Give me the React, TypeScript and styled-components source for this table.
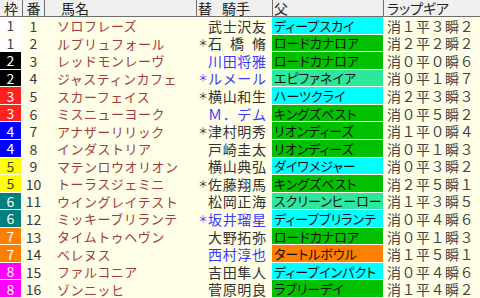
import React from "react";
import styled, { createGlobalStyle } from "styled-components";

const Global = createGlobalStyle`
  html, body { margin: 0; padding: 0; background: #ffffe8; }
  body { font-family: "Noto Sans CJK JP", "Noto Sans", sans-serif; }
`;

const COLS = "22px 22px 152px 76px 111px 97px";

const Table = styled.div`
  width: 480px;
  height: 298px;
  display: flex;
  flex-direction: column;
  background: #ffffe8;
  overflow: hidden;
`;

const HeaderRow = styled.div`
  display: grid;
  grid-template-columns: ${COLS};
  height: 17px;
  flex: none;
  background: #f0f0f0;
  border-bottom: 1px solid #6e6e6e;
  box-sizing: border-box;
`;

const HeadCell = styled.div<{ $pl?: number; $center?: boolean; $first?: boolean }>`
  display: flex;
  align-items: center;
  gap: 10px;
  justify-content: ${(p) => (p.$center ? "center" : "flex-start")};
  padding-left: ${(p) => p.$pl ?? 0}px;
  border-left: ${(p) => (p.$first ? "none" : "1px solid #6e6e6e")};
  font-size: 14px;
  line-height: 1;
  color: #222;
  white-space: nowrap;
  font-feature-settings: "palt";
`;

const Row = styled.div`
  display: grid;
  grid-template-columns: ${COLS};
  flex: 1;
  min-height: 0;
`;

const Waku = styled.div<{ $bg: string; $fg: string }>`
  background: ${(p) => p.$bg};
  color: ${(p) => p.$fg};
  border-bottom: 1px solid #ffffe8;
  border-right: 1px solid #ffffe8;
  display: flex;
  align-items: center;
  justify-content: center;
  font-size: 14px;
  line-height: 1;
`;

const Num = styled.div`
  display: flex;
  align-items: center;
  justify-content: center;
  padding-left: 1px;
  font-size: 14px;
  line-height: 1;
  color: #3a3a3a;
`;

const Name = styled.div`
  display: flex;
  align-items: center;
  padding-left: 13px;
  font-size: 13px;
  letter-spacing: 0.5px;
  line-height: 1;
  color: #a23a3a;
  white-space: nowrap;
  overflow: visible;
`;

const Jockey = styled.div<{ $blue: boolean }>`
  display: flex;
  align-items: center;
  justify-content: flex-end;
  padding-right: 6px;
  font-size: 14px;
  line-height: 1;
  color: ${(p) => (p.$blue ? "#3a3aff" : "#333")};
  white-space: nowrap;
`;

const Star = styled.span`
  width: 9px;
  font-size: 10px;
  text-align: left;
  margin-right: 1px;
  overflow: visible;
`;

const JName = styled.span`
  width: 58px;
  display: flex;
  justify-content: space-between;
`;

const Sire = styled.div<{ $bg: string }>`
  background: ${(p) => p.$bg};
  border-bottom: 1px solid #ffffe8;
  display: flex;
  align-items: center;
  padding-left: 2px;
  font-size: 13px;
  line-height: 1;
  color: #111;
  white-space: nowrap;
  overflow: hidden;
  font-feature-settings: "palt";
`;

const Gear = styled.div`
  display: flex;
  align-items: center;
  padding-left: 4px;
  font-size: 14px;
  letter-spacing: 0.5px;
  line-height: 1;
  color: #444;
  white-space: nowrap;
`;

const WAKU: Record<number, [string, string]> = {
  1: ["#ffffff", "#444"],
  2: ["#000000", "#fff"],
  3: ["#ff2020", "#fff"],
  4: ["#0000ff", "#fff"],
  5: ["#ffff00", "#444"],
  6: ["#008080", "#fff"],
  7: ["#ff8000", "#fff"],
  8: ["#ff00ff", "#fff"],
};

const SIRE_BG: Record<string, string> = {
  c: "#00ffff",
  g: "#00c000",
  s: "#2de89c",
  o: "#ff8000",
};

type Horse = {
  w: number;
  n: number;
  name: string;
  star: boolean;
  jockey: string[];
  blue: boolean;
  sire: string;
  sc: string;
  gear: string;
};

const j = (s: string) => Array.from(s);

const horses: Horse[] = [
  { w: 1, n: 1, name: "ソロフレーズ", star: false, jockey: j("武士沢友"), blue: false, sire: "ディープスカイ", sc: "c", gear: "消１平３瞬２" },
  { w: 1, n: 2, name: "ルプリュフォール", star: true, jockey: j("石橋脩"), blue: false, sire: "ロードカナロア", sc: "g", gear: "消２平２瞬２" },
  { w: 2, n: 3, name: "レッドモンレーヴ", star: false, jockey: j("川田将雅"), blue: true, sire: "ロードカナロア", sc: "g", gear: "消０平０瞬６" },
  { w: 2, n: 4, name: "ジャスティンカフェ", star: true, jockey: j("ルメール"), blue: true, sire: "エピファネイア", sc: "s", gear: "消０平１瞬７" },
  { w: 3, n: 5, name: "スカーフェイス", star: true, jockey: j("横山和生"), blue: false, sire: "ハーツクライ", sc: "c", gear: "消２平３瞬３" },
  { w: 3, n: 6, name: "ミスニューヨーク", star: false, jockey: ["Ｍ", "．", "デ", "ム"], blue: true, sire: "キングズベスト", sc: "g", gear: "消０平５瞬２" },
  { w: 4, n: 7, name: "アナザーリリック", star: true, jockey: j("津村明秀"), blue: false, sire: "リオンディーズ", sc: "g", gear: "消１平０瞬４" },
  { w: 4, n: 8, name: "インダストリア", star: false, jockey: j("戸崎圭太"), blue: false, sire: "リオンディーズ", sc: "g", gear: "消０平１瞬３" },
  { w: 5, n: 9, name: "マテンロウオリオン", star: false, jockey: j("横山典弘"), blue: false, sire: "ダイワメジャー", sc: "c", gear: "消０平３瞬２" },
  { w: 5, n: 10, name: "トーラスジェミニ", star: true, jockey: j("佐藤翔馬"), blue: false, sire: "キングズベスト", sc: "g", gear: "消２平５瞬１" },
  { w: 6, n: 11, name: "ウイングレイテスト", star: false, jockey: j("松岡正海"), blue: false, sire: "スクリーンヒーロー", sc: "s", gear: "消１平３瞬５" },
  { w: 6, n: 12, name: "ミッキーブリランテ", star: true, jockey: j("坂井瑠星"), blue: true, sire: "ディープブリランテ", sc: "c", gear: "消０平４瞬６" },
  { w: 7, n: 13, name: "タイムトゥヘヴン", star: false, jockey: j("大野拓弥"), blue: false, sire: "ロードカナロア", sc: "g", gear: "消０平１瞬３" },
  { w: 7, n: 14, name: "ベレヌス", star: false, jockey: j("西村淳也"), blue: true, sire: "タートルボウル", sc: "o", gear: "消１平５瞬１" },
  { w: 8, n: 15, name: "ファルコニア", star: false, jockey: j("吉田隼人"), blue: false, sire: "ディープインパクト", sc: "c", gear: "消０平４瞬６" },
  { w: 8, n: 16, name: "ゾンニッヒ", star: false, jockey: j("菅原明良"), blue: false, sire: "ラブリーデイ", sc: "g", gear: "消１平４瞬２" },
];

export default function App() {
  return (
    <>
      <Global />
      <Table>
        <HeaderRow>
          <HeadCell $first $center>枠</HeadCell>
          <HeadCell $center>番</HeadCell>
          <HeadCell $pl={16}>馬名</HeadCell>
          <HeadCell $pl={1}>
            <span>替</span>
            <span>騎手</span>
          </HeadCell>
          <HeadCell $pl={1}>父</HeadCell>
          <HeadCell $pl={3}>ラップギア</HeadCell>
        </HeaderRow>
        {horses.map((h) => (
          <Row key={h.n}>
            <Waku $bg={WAKU[h.w][0]} $fg={WAKU[h.w][1]}>{h.w}</Waku>
            <Num>{h.n}</Num>
            <Name>{h.name}</Name>
            <Jockey $blue={h.blue}>
              <Star>{h.star ? "＊" : ""}</Star>
              <JName>
                {h.jockey.map((c, i) => (
                  <span key={i}>{c}</span>
                ))}
              </JName>
            </Jockey>
            <Sire $bg={SIRE_BG[h.sc]}>{h.sire}</Sire>
            <Gear>{h.gear}</Gear>
          </Row>
        ))}
      </Table>
    </>
  );
}
